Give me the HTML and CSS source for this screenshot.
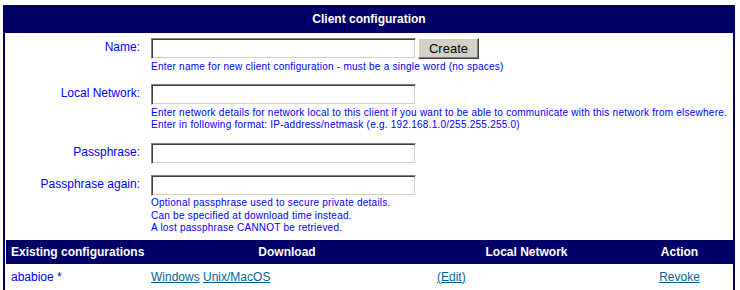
FILE: index.html
```html
<!DOCTYPE html>
<html lang="en">
<head>
    <meta charset="UTF-8">
    <title>Client configuration</title>
    <link rel="stylesheet" href="styles.css">
</head>
<body>
    <div class="panel">
        <div class="panel-title">Client configuration</div>

        <div class="config-form">
            <label class="label" for="name">Name:</label>
            <div class="field">
                <div class="field-line">
                    <input type="text" id="name" class="text-input">
                    <button class="btn">Create</button>
                </div>
                <div class="hint">Enter name for new client configuration - must be a single word (no spaces)</div>
            </div>

            <label class="label" for="network">Local Network:</label>
            <div class="field">
                <input type="text" id="network" class="text-input">
                <div class="hint">
                    Enter network details for network local to this client if you want to be able to communicate with this network from elsewhere.<br>
                    Enter in following format: IP-address/netmask (e.g. 192.168.1.0/255.255.255.0)
                </div>
            </div>

            <label class="label" for="pass">Passphrase:</label>
            <div class="field">
                <input type="password" id="pass" class="text-input">
            </div>

            <label class="label" for="pass2">Passphrase again:</label>
            <div class="field">
                <input type="password" id="pass2" class="text-input">
                <div class="hint">
                    Optional passphrase used to secure private details.<br>
                    Can be specified at download time instead.<br>
                    A lost passphrase CANNOT be retrieved.
                </div>
            </div>
        </div>

        <table class="configs">
            <colgroup>
                <col class="col-name">
                <col class="col-download">
                <col class="col-network">
                <col>
            </colgroup>
            <thead>
                <tr>
                    <th class="left">Existing configurations</th>
                    <th>Download</th>
                    <th>Local Network</th>
                    <th>Action</th>
                </tr>
            </thead>
            <tbody>
                <tr>
                    <td class="client">ababioe *</td>
                    <td><a href="#">Windows</a> <a href="#">Unix/MacOS</a></td>
                    <td class="network"><a href="#">(Edit)</a></td>
                    <td class="action"><a href="#">Revoke</a></td>
                </tr>
            </tbody>
        </table>
    </div>
</body>
</html>
```

FILE: styles.css
```css
* {
    box-sizing: border-box;
}

body {
    margin: 5px 5px 0 3px;
    background: #ffffff;
    font-family: "Liberation Sans", Arial, sans-serif;
    font-size: 12px;
    color: #0000ff;
}

.panel {
    border-left: 2px solid #000066;
    border-right: 2px solid #000066;
}

.panel-title {
    background: #000066;
    color: #ffffff;
    font-weight: bold;
    text-align: center;
    height: 28px;
    line-height: 28px;
    margin: 0 -2px;
}

.config-form {
    display: grid;
    grid-template-columns: 146px 1fr;
    row-gap: 11px;
    padding-top: 5px;
}

.label {
    text-align: right;
    padding-right: 11px;
    padding-top: 2px;
    line-height: 14px;
}

.field-line {
    display: flex;
    gap: 2px;
}

.text-input {
    display: block;
    width: 265px;
    height: 21px;
    margin: 0;
    padding: 1px 3px;
    border: 1px solid;
    border-color: #808080 #ffffff #ffffff #808080;
    box-shadow: inset 1px 1px #404040, inset -1px -1px #d4d0c8;
    background: #ffffff;
    font-family: "Liberation Sans", Arial, sans-serif;
    font-size: 12px;
}

.btn {
    width: 61px;
    height: 21px;
    margin: 0;
    padding: 0;
    background: #d4d0c8;
    border: 1px solid;
    border-color: #ffffff #404040 #404040 #ffffff;
    box-shadow: inset -1px -1px #808080;
    font-family: "Liberation Sans", Arial, sans-serif;
    font-size: 13px;
    color: #000000;
}

.hint {
    font-size: 10px;
    line-height: 12.5px;
    margin-top: 1.5px;
    letter-spacing: 0.24px;
}

.configs {
    width: calc(100% - 1px);
    margin: 5px 0 0 1px;
    border-collapse: collapse;
    table-layout: fixed;
}

.col-name {
    width: 141px;
}

.col-download {
    width: 280px;
}

.col-network {
    width: 199px;
}

.configs th {
    background: #000066;
    color: #ffffff;
    font-weight: bold;
    height: 24px;
    padding: 0 4px;
    text-align: center;
    white-space: nowrap;
}

.configs th.left {
    text-align: left;
    padding: 0 0 0 5px;
    overflow: visible;
}

.configs td {
    height: 26px;
    padding: 0 4px;
    vertical-align: middle;
    white-space: nowrap;
}

.configs td.client {
    padding-left: 5px;
}

.configs td.network {
    padding-left: 10px;
}

.configs td.action {
    text-align: center;
}

.configs a {
    color: #006699;
}
```
